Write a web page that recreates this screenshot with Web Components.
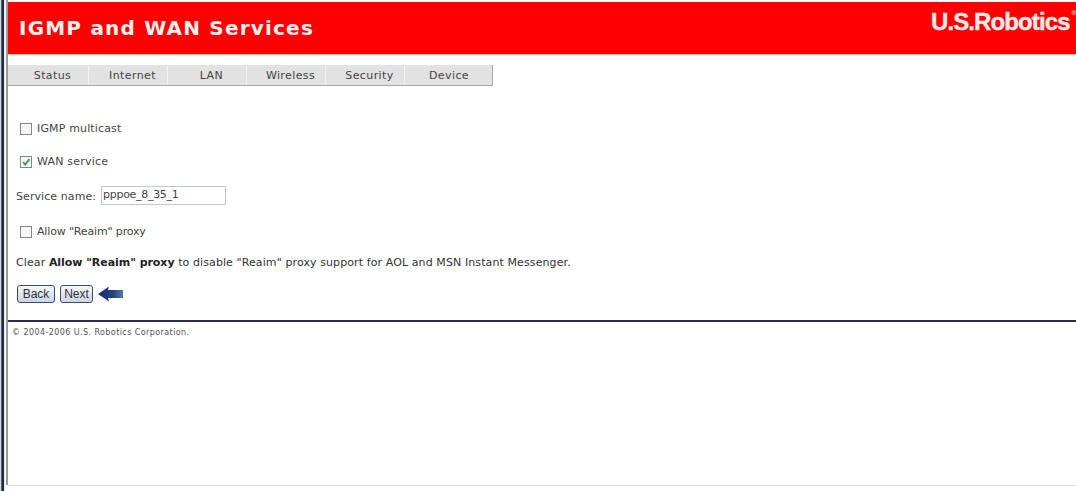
<!DOCTYPE html>
<html>
<head>
<meta charset="utf-8">
<title>IGMP and WAN Services</title>
<style>
  html, body { margin: 0; height: 100%; background: #fff; overflow: hidden; }
  body { font-family: "DejaVu Sans", Verdana, sans-serif; color: #333; }
</style>
</head>
<body>
<usr-frame>
  <usr-header title-text="IGMP and WAN Services"></usr-header>
  <usr-nav>
    <usr-tab style="width:81px">Status</usr-tab>
    <usr-tab>Internet</usr-tab>
    <usr-tab>LAN</usr-tab>
    <usr-tab>Wireless</usr-tab>
    <usr-tab>Security</usr-tab>
    <usr-tab style="width:88px;padding-right:9px">Device</usr-tab>
  </usr-nav>
  <wan-form></wan-form>
  <usr-footer></usr-footer>
</usr-frame>

<script>
class UsrFrame extends HTMLElement {
  constructor() {
    super();
    this.attachShadow({ mode: "open" });
    this.shadowRoot.innerHTML = `
    <style>
      :host { display: flex; width: 1076px; height: 491px; background: #fff; }
      .edge {
        flex: 0 0 8px;
        background:
          linear-gradient(#9a9a9a, #9a9a9a) 6px 0 / 2px 485px no-repeat,
          linear-gradient(to right, #d8d8d8 0 1px, #5b6170 1px 2px, #1f2a44 2px 4px, #e8e8e8 4px 5px, #fff 5px 8px);
      }
      .main { flex: 1; min-width: 0; display: flex; flex-direction: column; padding-top: 2px; }
      .bottom { flex: 0 0 5px; border-top: 1px solid #dcdcdc; margin-top: auto; }
    </style>
    <div class="edge"></div>
    <div class="main">
      <slot></slot>
      <div class="bottom"></div>
    </div>`;
  }
}

class UsrHeader extends HTMLElement {
  constructor() {
    super();
    this.attachShadow({ mode: "open" });
  }
  connectedCallback() {
    this.shadowRoot.innerHTML = `
    <style>
      :host {
        display: flex; justify-content: space-between; height: 52px;
        background: #fe0000; color: #fff; border-bottom: 1px solid #f4b8b8;
      }
      h1 {
        margin: 0; padding: 14px 0 0 11px;
        font: bold 20px/24px "DejaVu Sans", Verdana, sans-serif;
        letter-spacing: 1.2px; color: #fdf2f0;
      }
      .logo {
        padding: 5px 0 0 0;
        font: bold 24px/30px "Liberation Sans", Arial, sans-serif;
        letter-spacing: -0.9px; color: #fbeaea; white-space: nowrap;
        -webkit-text-stroke: 0.4px #fbeaea;
      }
      sup { font-size: 6px; line-height: 0; vertical-align: 15px; letter-spacing: 0; margin-left: 2px; -webkit-text-stroke: 0; }
    </style>
    <h1>${this.getAttribute("title-text")}</h1>
    <div class="logo">U.S.Robotics<sup>®</sup></div>`;
  }
}

class UsrNav extends HTMLElement {
  constructor() {
    super();
    this.attachShadow({ mode: "open" });
    this.shadowRoot.innerHTML = `
    <style>
      :host {
        display: flex; width: 485px; height: 20px; margin-top: 10px;
        background: #e2e2e2; border-bottom: 1px solid #a8a8a8;
        box-shadow: inset -1px 0 0 #a8a8a8;
      }
    </style>
    <slot></slot>`;
  }
}

class UsrTab extends HTMLElement {
  constructor() {
    super();
    this.attachShadow({ mode: "open" });
    this.shadowRoot.innerHTML = `
    <style>
      :host {
        display: flex; align-items: center; justify-content: center;
        box-sizing: border-box; width: 79px;
        font: 11px "DejaVu Sans", Verdana, sans-serif; color: #444;
        letter-spacing: 0.4px;
        border-right: 1px solid #f0f0f0;
        padding: 1px 0 0 9px;
      }
      :host(:last-child) { border-right: 0; }
    </style>
    <slot></slot>`;
  }
}

class UsrCheck extends HTMLElement {
  constructor() {
    super();
    this.attachShadow({ mode: "open" });
  }
  connectedCallback() {
    const tick = this.hasAttribute("checked")
      ? `<svg width="10" height="10" viewBox="0 0 10 10"><path d="M2 5 L4.2 7.6 L8.4 2.2" fill="none" stroke="#3f9a4a" stroke-width="1.9"/></svg>`
      : "";
    this.shadowRoot.innerHTML = `
    <style>
      :host { display: flex; align-items: center; gap: 5px; padding-left: 12px; height: 13px; font-size: 11px; color: #444; }
      .box {
        box-sizing: border-box; width: 12px; height: 12px; display: flex; align-items: center; justify-content: center;
        border: 1px solid #80868c; background: #f6f6f6;
      }
    </style>
    <span class="box">${tick}</span><slot></slot>`;
  }
}

class UsrButton extends HTMLElement {
  constructor() {
    super();
    this.attachShadow({ mode: "open" });
    this.shadowRoot.innerHTML = `
    <style>
      :host {
        display: inline-flex; align-items: center; justify-content: center;
        box-sizing: border-box; height: 18px; padding: 0 4px;
        font: 12px "Liberation Sans", Arial, sans-serif; color: #333;
        border: 1px solid #3c4a6a; border-radius: 3px;
        background: linear-gradient(#f6f7fb, #cdd4e6);
      }
    </style>
    <slot></slot>`;
  }
}

class WanForm extends HTMLElement {
  constructor() {
    super();
    this.attachShadow({ mode: "open" });
    this.shadowRoot.innerHTML = `
    <style>
      :host { display: flex; flex-direction: column; font: 11px "DejaVu Sans", Verdana, sans-serif; color: #444; padding-top: 36px; }
      .name { display: flex; align-items: center; gap: 5px; height: 19px; padding-left: 8px; margin-top: 18px; }
      .name > span:first-child { letter-spacing: 0.08px; position: relative; top: 1px; }
      .field {
        box-sizing: border-box; width: 125px; height: 19px; padding: 0 0 2px 1px;
        display: flex; align-items: center; letter-spacing: -0.3px;
        border: 1px solid #c4c8cc; background: #fff;
      }
      .hint { margin: 18px 0 0 8px; height: 13px; line-height: 13px; color: #333; letter-spacing: 0.1px; }
      b { color: #222; letter-spacing: -0.05px; }
      .actions { display: flex; align-items: center; gap: 5px; padding-left: 9px; margin-top: 16px; }
      usr-check + usr-check { margin-top: 20px; }
      .igmp { letter-spacing: 0.15px; }
      .wan { letter-spacing: 0.2px; }
      .allow { margin-top: 20px; letter-spacing: -0.15px; }
    </style>
    <usr-check class="igmp">IGMP multicast</usr-check>
    <usr-check class="wan" checked>WAN service</usr-check>
    <div class="name"><span>Service name:</span><span class="field">pppoe_8_35_1</span></div>
    <usr-check class="allow">Allow "Reaim" proxy</usr-check>
    <div class="hint">Clear <b>Allow "Reaim" proxy</b> to disable "Reaim" proxy support for AOL and MSN Instant Messenger.</div>
    <div class="actions">
      <usr-button style="width:38px">Back</usr-button>
      <usr-button style="width:33px">Next</usr-button>
      <svg width="26" height="16" viewBox="0 0 26 16">
        <defs><linearGradient id="a" x1="0" x2="1"><stop offset="0" stop-color="#1c2a78"/><stop offset="0.6" stop-color="#26407e"/><stop offset="1" stop-color="#4f7ea6"/></linearGradient></defs>
        <path d="M0 8 L11 0.5 L10 4 L25 4 L25 12 L10 12 L11 15.5 Z" fill="url(#a)"/>
      </svg>
    </div>`;
  }
}

class UsrFooter extends HTMLElement {
  constructor() {
    super();
    this.attachShadow({ mode: "open" });
    this.shadowRoot.innerHTML = `
    <style>
      :host { display: block; margin-top: 17px; border-top: 2px solid #2a2a5a; padding: 6px 0 0 4px; font: 8px/10px "DejaVu Sans", Verdana, sans-serif; color: #555; letter-spacing: 0.42px; }
    </style>
    © 2004-2006 U.S. Robotics Corporation.`;
  }
}

customElements.define("usr-frame", UsrFrame);
customElements.define("usr-header", UsrHeader);
customElements.define("usr-nav", UsrNav);
customElements.define("usr-tab", UsrTab);
customElements.define("usr-check", UsrCheck);
customElements.define("usr-button", UsrButton);
customElements.define("wan-form", WanForm);
customElements.define("usr-footer", UsrFooter);
</script>
</body>
</html>
